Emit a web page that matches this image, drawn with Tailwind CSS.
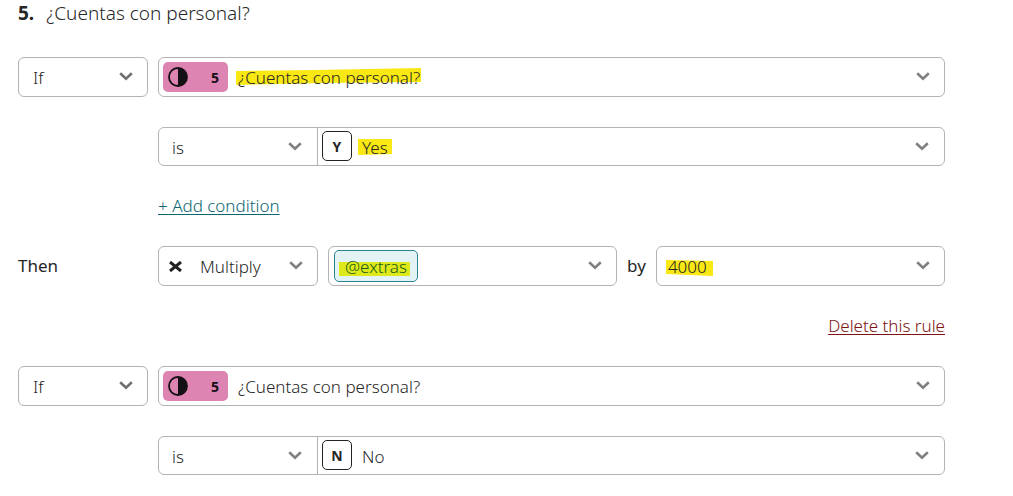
<!DOCTYPE html>
<html lang="es">
<head>
    <meta charset="UTF-8">
    <meta name="viewport" content="width=device-width, initial-scale=1.0">
    <title>Logic rules</title>
    <script src="https://cdn.jsdelivr.net/npm/@tailwindcss/browser@4"></script>
</head>
<body class="bg-white font-['Noto_Sans',sans-serif] text-[17px] text-[#262626]">

    <!-- Shared icons -->
    <svg class="hidden">
        <symbol id="chevron" viewBox="0 0 14 9">
            <path d="M1.2 1.3 7 6.8l5.800-5.500" fill="none" stroke="currentColor" stroke-width="2.600"/>
        </symbol>
        <symbol id="half" viewBox="0 0 20 20">
            <circle cx="10" cy="10" r="9" fill="none" stroke="currentColor" stroke-width="1.800"/>
            <path d="M10 1a9 9 0 0 1 0 18z" fill="currentColor"/>
        </symbol>
    </svg>

    <main class="pl-[18px] pr-[68px]">

        <!-- Question title -->
        <h1 class="h-[57px] text-[19px] leading-[26px] font-light"><strong class="mr-3 font-bold">5.</strong>¿Cuentas con personal?</h1>

        <div class="flex flex-col gap-[30px]">

            <!-- First rule -->
            <div class="flex gap-[10px]">
                <div class="relative h-10 w-[130px]">
                    <select aria-label="Rule type" class="h-full w-full appearance-none rounded-md border border-[#b3b3b3] pt-[2px] pl-[14px] font-light">
                        <option>If</option>
                    </select>
                    <svg class="pointer-events-none absolute top-[15px] right-[15px] h-[9px] w-[14px] text-[#707070]"><use href="#chevron"/></svg>
                </div>
                <div class="relative h-10 flex-1">
                    <svg class="absolute top-[11px] left-[77px] h-[17px] w-[187px]" viewBox="0 0 187 17" preserveAspectRatio="none"><path d="M1 3 80 2 186 0V14L90 15 1 17z" fill="#f9e814"/></svg>
                    <select aria-label="Question" class="relative h-full w-full appearance-none rounded-md border border-[#b3b3b3] pt-[2px] pl-[79px] font-light">
                        <option>¿Cuentas con personal?</option>
                    </select>
                    <span class="pointer-events-none absolute top-[5px] left-[5px] flex h-[30px] w-[65px] items-center justify-between rounded-[5px] bg-[#dd84b2] pr-[9px] pl-[5px] text-[14px] font-bold text-[#151015]">
                        <svg class="h-5 w-5"><use href="#half"/></svg>5
                    </span>
                    <svg class="pointer-events-none absolute top-[15px] right-[15px] h-[9px] w-[14px] text-[#808080]"><use href="#chevron"/></svg>
                </div>
            </div>

            <div class="flex h-[39px] pl-[140px]">
                <div class="relative w-[160px]">
                    <select aria-label="Comparison" class="h-full w-full appearance-none rounded-l-md border border-[#b3b3b3] pt-[2px] pl-[13px] font-light">
                        <option>is</option>
                    </select>
                    <svg class="pointer-events-none absolute top-[15px] right-[16px] h-[9px] w-[14px] text-[#808080]"><use href="#chevron"/></svg>
                </div>
                <div class="relative -ml-px flex-1">
                    <svg class="absolute top-[12px] left-[41px] h-[16px] w-[34px]" viewBox="0 0 34 16"><path d="M0 0h34v15L0 16z" fill="#f9e814"/></svg>
                    <select aria-label="Answer" class="relative h-full w-full appearance-none rounded-r-md border border-[#b3b3b3] pt-[2px] pl-[44px] font-light">
                        <option>Yes</option>
                    </select>
                    <span class="pointer-events-none absolute top-[4px] left-[5px] flex h-[30px] w-[30px] items-center justify-center rounded-[5px] border border-[#222222] bg-white text-[14px] font-bold">Y</span>
                    <svg class="pointer-events-none absolute top-[15px] right-[16px] h-[9px] w-[14px] text-[#808080]"><use href="#chevron"/></svg>
                </div>
            </div>

            <div class="flex h-5 items-center pl-[140px]">
                <a href="#" class="font-light text-[#0b6670] underline underline-offset-2">+ Add condition</a>
            </div>

            <div class="flex items-center gap-[10px]">
                <span class="w-[130px]">Then</span>
                <div class="relative h-10 w-[160px]">
                    <select aria-label="Operation" class="h-full w-full appearance-none rounded-md border border-[#b3b3b3] pt-[2px] pl-[41px] font-light">
                        <option>Multiply</option>
                    </select>
                    <svg class="pointer-events-none absolute top-[15px] left-[11px] h-[11px] w-[13px]" viewBox="0 0 13 11"><path d="M1 1l11 9M12 1L1 10" stroke="#222222" stroke-width="3"/></svg>
                    <svg class="pointer-events-none absolute top-[15px] right-[15px] h-[9px] w-[14px] text-[#808080]"><use href="#chevron"/></svg>
                </div>
                <div class="relative h-10 flex-1">
                    <span class="absolute top-[4px] left-[6px] h-8 w-[84px] rounded-[5px] border border-[#2a8295] bg-[#e3f3f5]"></span>
                    <svg class="absolute top-[16px] left-[11px] h-[14px] w-[71px]" viewBox="0 0 71 14"><path d="M0 0h71v14H0z" fill="#dde91a"/></svg>
                    <select aria-label="Variable" class="relative h-full w-full appearance-none rounded-md border border-[#b3b3b3] pt-[2px] pl-[16px] font-light text-[#235c18]">
                        <option>@extras</option>
                    </select>
                    <svg class="pointer-events-none absolute top-[15px] right-[15px] h-[9px] w-[14px] text-[#808080]"><use href="#chevron"/></svg>
                </div>
                <span>by</span>
                <div class="relative h-10 flex-1">
                    <svg class="absolute top-[14px] left-[10px] h-[16px] w-[47px]" viewBox="0 0 47 16"><path d="M0 0 47 1v15L0 14z" fill="#f9e814"/></svg>
                    <select aria-label="Amount" class="relative h-full w-full appearance-none rounded-md border border-[#b3b3b3] pt-[2px] pl-[11px] font-light">
                        <option>4000</option>
                    </select>
                    <svg class="pointer-events-none absolute top-[15px] right-[15px] h-[9px] w-[14px] text-[#808080]"><use href="#chevron"/></svg>
                </div>
            </div>

            <div class="flex h-5 items-center justify-end">
                <a href="#" class="font-light text-[#7d1212] underline underline-offset-2">Delete this rule</a>
            </div>

            <!-- Second rule -->
            <div class="flex gap-[10px]">
                <div class="relative h-10 w-[130px]">
                    <select aria-label="Rule type" class="h-full w-full appearance-none rounded-md border border-[#b3b3b3] pt-[2px] pl-[14px] font-light">
                        <option>If</option>
                    </select>
                    <svg class="pointer-events-none absolute top-[15px] right-[15px] h-[9px] w-[14px] text-[#707070]"><use href="#chevron"/></svg>
                </div>
                <div class="relative h-10 flex-1">
                    <select aria-label="Question" class="h-full w-full appearance-none rounded-md border border-[#b3b3b3] pt-[2px] pl-[79px] font-light">
                        <option>¿Cuentas con personal?</option>
                    </select>
                    <span class="pointer-events-none absolute top-[5px] left-[5px] flex h-[30px] w-[65px] items-center justify-between rounded-[5px] bg-[#dd84b2] pr-[9px] pl-[5px] text-[14px] font-bold text-[#151015]">
                        <svg class="h-5 w-5"><use href="#half"/></svg>5
                    </span>
                    <svg class="pointer-events-none absolute top-[15px] right-[15px] h-[9px] w-[14px] text-[#808080]"><use href="#chevron"/></svg>
                </div>
            </div>

            <div class="flex h-[39px] pl-[140px]">
                <div class="relative w-[160px]">
                    <select aria-label="Comparison" class="h-full w-full appearance-none rounded-l-md border border-[#b3b3b3] pt-[2px] pl-[13px] font-light">
                        <option>is</option>
                    </select>
                    <svg class="pointer-events-none absolute top-[15px] right-[16px] h-[9px] w-[14px] text-[#808080]"><use href="#chevron"/></svg>
                </div>
                <div class="relative -ml-px flex-1">
                    <select aria-label="Answer" class="h-full w-full appearance-none rounded-r-md border border-[#b3b3b3] pt-[2px] pl-[44px] font-light">
                        <option>No</option>
                    </select>
                    <span class="pointer-events-none absolute top-[4px] left-[5px] flex h-[30px] w-[30px] items-center justify-center rounded-[5px] border border-[#222222] bg-white text-[14px] font-bold">N</span>
                    <svg class="pointer-events-none absolute top-[15px] right-[16px] h-[9px] w-[14px] text-[#808080]"><use href="#chevron"/></svg>
                </div>
            </div>

        </div>
    </main>

</body>
</html>
